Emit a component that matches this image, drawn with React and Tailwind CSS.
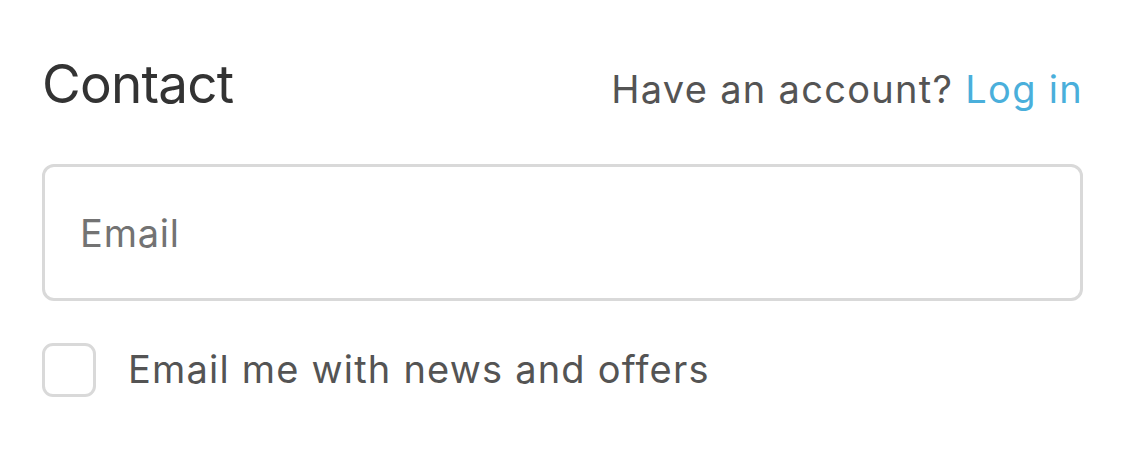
import React, {useState} from 'react';

const App = () => {
    const [email, setEmail] = useState("")
    const [subscribe, setSubscribe] = useState(false)

    return (
        <div className="w-[1125px] h-[469px] bg-white px-[42px] pt-[52px]"
             style={{fontFamily: "Inter, 'Noto Sans', sans-serif"}}>
            <div className="flex flex-row justify-between items-baseline">
                <h2 className="text-[53px] leading-[64px] text-[#333333] tracking-[-0.8px]">Contact</h2>
                <p className="text-[38px] text-[#545454] tracking-[1.3px]">
                    Have an account? <a className="text-[#4aafdb]">Log in</a>
                </p>
            </div>
            <div className="mt-[46px]">
                <input
                    type="email"
                    value={email}
                    onChange={(e) => setEmail(e.target.value)}
                    placeholder="Email"
                    className="w-full h-[137px] rounded-[12px] border-[3px] border-[#d9d9d9] px-[35px] text-[38px] tracking-[0.8px] text-[#333333] placeholder:text-[#737373] outline-none"
                />
            </div>
            <label className="mt-[40px] flex flex-row items-center gap-[32px] cursor-pointer">
                <span
                    onClick={() => setSubscribe(!subscribe)}
                    className="w-[54px] h-[54px] rounded-[11px] border-[3px] border-[#d9d9d9] bg-white shrink-0"></span>
                <span className="text-[38px] text-[#545454] tracking-[1.2px]">Email me with news and offers</span>
            </label>
        </div>
    );
}

export default App;
